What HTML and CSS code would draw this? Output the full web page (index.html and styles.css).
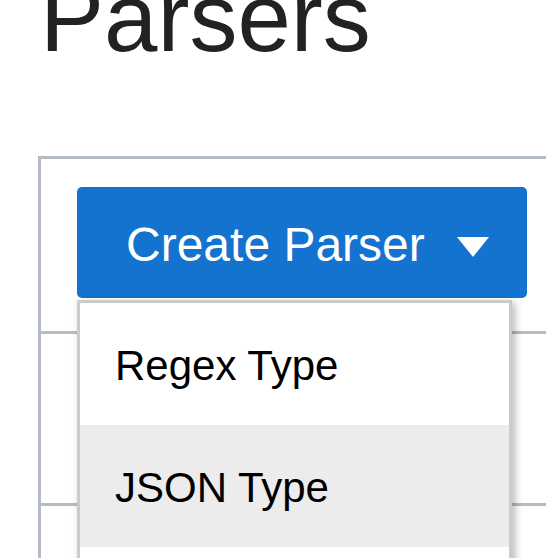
FILE: index.html
```html
<!DOCTYPE html>
<html>
<head>
	<title>Parsers</title>
	<meta charset="utf-8">
	<link rel="stylesheet" href="styles.css">
</head>
<body>
	<h1 class="pageTitle">Parsers</h1>
	<section class="panel">
		<div class="toolbar">
			<div class="dropdown">
				<button class="createBtn" type="button">
					<span>Create Parser</span>
					<svg class="caret" width="32" height="20" viewBox="0 0 32 20"><polygon points="0,0 32,0 16,20" fill="#fff"/></svg>
				</button>
				<ul class="menu">
					<li class="menuItem">Regex Type</li>
					<li class="menuItem active">JSON Type</li>
				</ul>
			</div>
		</div>
		<div class="row"></div>
		<div class="row"></div>
	</section>
</body>
</html>
```
FILE: styles.css
```css
*{
	padding: 0;
	margin: 0;
	box-sizing: border-box;
}
body{
	font-family: "Liberation Sans", Arial, sans-serif;
	background: #fff;
	overflow: hidden;
}
.pageTitle{
	font-size: 96px;
	font-weight: normal;
	line-height: 96px;
	color: #222;
	margin: -30px 0 90px 40px;
}
.panel{
	margin-left: 38px;
	width: 700px;
	border-top: 3px solid #b6bcc3;
	border-left: 3px solid #b6bcc3;
}
.toolbar{
	height: 172px;
	padding: 28px 0 0 36px;
}
.dropdown{
	position: relative;
	width: 450px;
}
.createBtn{
	display: flex;
	align-items: center;
	justify-content: space-between;
	width: 450px;
	height: 111px;
	padding: 4px 38px 0 49px;
	border: none;
	border-radius: 5px;
	background: #1373ce;
	color: #fff;
	font-family: inherit;
	font-size: 48px;
}
.caret{
	display: block;
	margin-top: 4px;
}
.menu{
	position: absolute;
	top: 113px;
	left: 0;
	width: 435px;
	list-style: none;
	padding-bottom: 122px;
	background: #fff;
	border: 3px solid #cbcbcb;
	box-shadow: 3px 3px 8px rgba(0, 0, 0, 0.28);
	z-index: 2;
}
.menuItem{
	height: 122px;
	padding: 39px 0 0 35px;
	font-size: 42px;
	line-height: 47px;
	color: #000;
}
.menuItem.active{
	background: #ececed;
}
.row{
	height: 172px;
	border-top: 3px solid #b6bcc3;
}
```
